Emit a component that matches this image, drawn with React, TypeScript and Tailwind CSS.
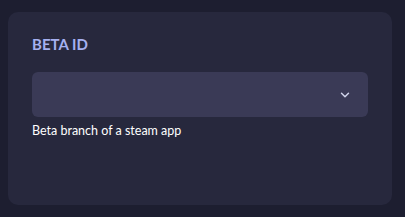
import { ChevronDown } from "lucide-react";

export default function App() {
  return (
    <div
      className="h-[217px] w-[405px] bg-[#1d1e30] pl-2 pr-[13px] pt-3 pb-3"
      style={{ fontFamily: 'Lato, "Open Sans", sans-serif' }}
    >
      <div className="h-full rounded-[10px] bg-[#27283d] px-6 pt-[22px]">
        <label className="block text-[15px] font-bold leading-5 text-[#a5b0f0]">BETA ID</label>
        <button className="mt-[18px] flex h-[45px] w-full items-center justify-end rounded-md bg-[#3a3a56] pr-4">
          <ChevronDown className="h-[14px] w-[14px] text-[#d0d3ea]" strokeWidth={2.5} />
        </button>
        <p className="mt-[6px] text-[12.5px] leading-4 text-white">Beta branch of a steam app</p>
      </div>
    </div>
  );
}
